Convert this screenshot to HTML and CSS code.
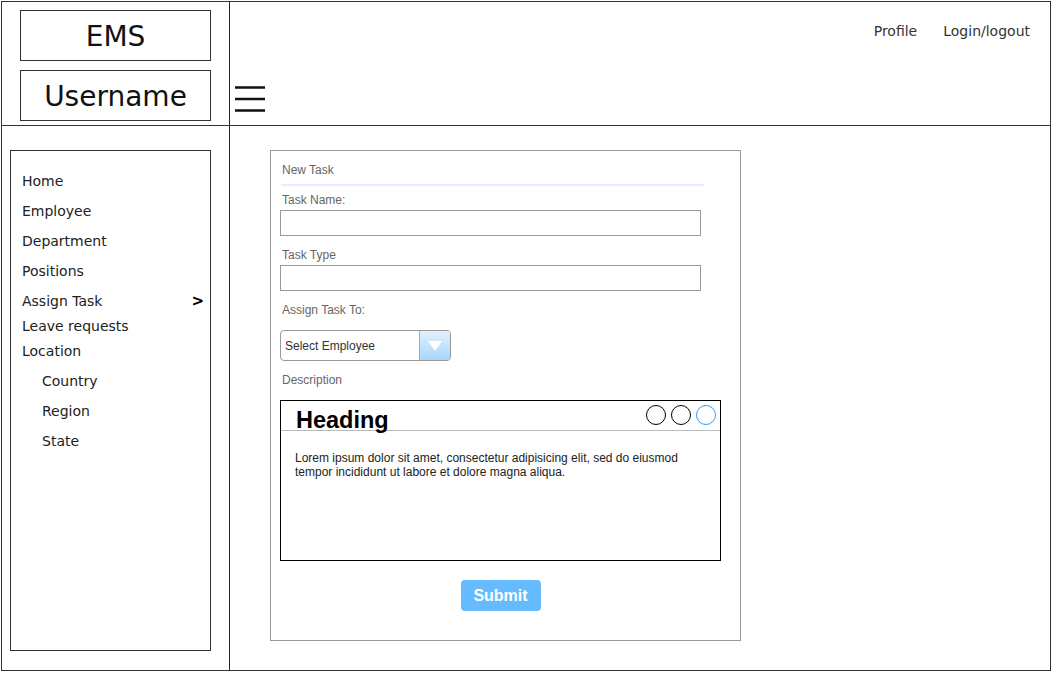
FILE: index.html
```html
<!DOCTYPE html>
<html lang="en">
<head>
    <meta charset="UTF-8">
    <meta name="viewport" content="width=device-width, initial-scale=1.0">
    <title>EMS - Assign Task</title>
    <link rel="stylesheet" href="styles.css">
</head>
<body>
    <div class="frame">
        <div class="brand">
            <div class="brand-box">EMS</div>
            <div class="brand-box">Username</div>
        </div>
        <div class="topbar">
            <nav class="user-links">
                <a href="#">Profile</a>
                <a href="#">Login/logout</a>
            </nav>
            <button class="menu-toggle" type="button" aria-label="Menu">
                <svg width="30" height="26" viewBox="0 0 30 26">
                    <path d="M0 1.5H30M0 13H30M0 24.5H30" stroke="#111" stroke-width="2.6" fill="none"/>
                </svg>
            </button>
        </div>
        <aside class="sidebar">
            <ul class="side-nav">
                <li><a href="#">Home</a></li>
                <li><a href="#">Employee</a></li>
                <li><a href="#">Department</a></li>
                <li><a href="#">Positions</a></li>
                <li class="active"><a href="#">Assign Task</a><span class="arrow">&gt;</span></li>
                <li class="tight"><a href="#">Leave requests</a></li>
                <li><a href="#">Location</a></li>
                <li class="sub"><a href="#">Country</a></li>
                <li class="sub"><a href="#">Region</a></li>
                <li class="sub"><a href="#">State</a></li>
            </ul>
        </aside>
        <main class="content">
            <form class="task-panel" onsubmit="return false;">
                <div class="panel-title">New Task</div>
                <div class="panel-rule"></div>

                <label class="field-label" for="task-name">Task Name:</label>
                <input class="text-input" id="task-name" type="text">

                <label class="field-label gap" for="task-type">Task Type</label>
                <input class="text-input" id="task-type" type="text">

                <label class="field-label gap">Assign Task To:</label>
                <div class="select-box">
                    <span class="select-text">Select Employee</span>
                    <span class="select-btn"><span class="caret"></span></span>
                </div>

                <label class="field-label gap">Description</label>
                <div class="desc-box">
                    <div class="desc-head">
                        <h3>Heading</h3>
                        <div class="dots">
                            <span class="dot"></span>
                            <span class="dot"></span>
                            <span class="dot blue"></span>
                        </div>
                    </div>
                    <p class="desc-text">Lorem ipsum dolor sit amet, consectetur adipisicing elit, sed do eiusmod tempor incididunt ut labore et dolore magna aliqua.</p>
                </div>

                <div class="actions">
                    <button class="submit-btn" type="submit">Submit</button>
                </div>
            </form>
        </main>
    </div>
</body>
</html>
```

FILE: styles.css
```css
body {
    margin: 0;
    padding: 0;
    background-color: #ffffff;
    font-family: 'DejaVu Sans', Verdana, sans-serif;
    color: #222;
}
a {
    color: inherit;
    text-decoration: none;
}
.frame {
    margin: 1px 0 0 1px;
    width: 1050px;
    height: 670px;
    box-sizing: border-box;
    border: 1px solid #333;
    display: grid;
    grid-template-columns: 228px 1fr;
    grid-template-rows: 124px 1fr;
}
.brand {
    border-right: 1px solid #222;
    border-bottom: 1px solid #333;
    padding: 8px 0 0 18px;
    display: flex;
    flex-direction: column;
    gap: 9px;
}
.brand-box {
    width: 191px;
    height: 51px;
    box-sizing: border-box;
    border: 1px solid #333;
    display: flex;
    align-items: center;
    justify-content: center;
    padding-top: 2px;
    font-size: 28px;
    color: #111;
}
.topbar {
    border-bottom: 1px solid #333;
    padding: 19px 20px 0 5px;
    display: flex;
    flex-direction: column;
}
.user-links {
    display: flex;
    justify-content: flex-end;
    gap: 26px;
    font-size: 14px;
    line-height: 20px;
    color: #333;
}
.menu-toggle {
    margin-top: 45px;
    padding: 0;
    border: 0;
    background: none;
    width: 30px;
    height: 26px;
    cursor: pointer;
}
.menu-toggle svg {
    display: block;
}
.sidebar {
    border-right: 1px solid #222;
    padding: 24px 0 0 8px;
}
.side-nav {
    list-style: none;
    margin: 0;
    width: 201px;
    height: 501px;
    box-sizing: border-box;
    border: 1px solid #333;
    padding: 15px 6px 0 11px;
    font-size: 14px;
}
.side-nav li {
    height: 30px;
    display: flex;
    align-items: center;
    justify-content: space-between;
    color: #222;
}
.side-nav li.tight {
    height: 20px;
}
.side-nav li.sub {
    padding-left: 20px;
}
.side-nav .arrow {
    font-weight: bold;
    font-size: 15px;
    color: #000;
}
.content {
    padding: 24px 0 0 40px;
}
.task-panel {
    width: 471px;
    height: 491px;
    box-sizing: border-box;
    border: 1px solid #999;
    padding: 10px 0 0 9px;
    font-family: 'Liberation Sans', Arial, sans-serif;
    font-size: 12px;
    display: flex;
    flex-direction: column;
    align-items: flex-start;
}
.panel-title {
    padding-left: 2px;
    line-height: 18px;
    color: #666;
}
.panel-rule {
    margin: 5px 0 0 1px;
    width: 423px;
    height: 2px;
    background-color: #e3effc;
}
.field-label {
    display: block;
    margin-top: 6px;
    padding-left: 2px;
    line-height: 16px;
    color: #666;
}
.field-label.gap {
    margin-top: 11px;
}
.text-input {
    margin: 2px 0 0 0;
    width: 421px;
    height: 26px;
    box-sizing: border-box;
    border: 1px solid #999;
    padding: 0 4px;
    font: inherit;
}
.select-box {
    margin-top: 12px;
    width: 171px;
    height: 31px;
    box-sizing: border-box;
    border: 1px solid #999;
    border-radius: 4px;
    display: flex;
    overflow: hidden;
    background-color: #fff;
}
.select-text {
    flex: 1;
    padding: 1px 0 0 4px;
    line-height: 29px;
    color: #333;
}
.select-btn {
    width: 30px;
    border-left: 1px solid #aaa;
    background: linear-gradient(#e2f1ff, #a9d5fb);
    display: flex;
    align-items: center;
    justify-content: center;
}
.caret {
    width: 0;
    height: 0;
    border-left: 7px solid transparent;
    border-right: 7px solid transparent;
    border-top: 10px solid #fff;
}
.desc-box {
    margin-top: 12px;
    width: 441px;
    height: 161px;
    box-sizing: border-box;
    border: 1px solid #000;
}
.desc-head {
    height: 30px;
    box-sizing: border-box;
    border-bottom: 1px solid #bbb;
    padding: 7px 4px 0 15px;
    display: flex;
    justify-content: space-between;
    align-items: flex-start;
}
.desc-head h3 {
    margin: 0;
    font-size: 23.5px;
    line-height: 24px;
    font-weight: bold;
    color: #000;
}
.dots {
    margin-top: -3px;
    display: flex;
    gap: 5px;
}
.dot {
    width: 20px;
    height: 20px;
    box-sizing: border-box;
    border: 1px solid #000;
    border-radius: 50%;
}
.dot.blue {
    border-color: #3399ff;
}
.desc-text {
    margin: 20px 14px 0 14px;
    line-height: 14px;
    color: #222;
}
.actions {
    margin-top: 19px;
    width: 441px;
    display: flex;
    justify-content: center;
}
.submit-btn {
    width: 80px;
    height: 31px;
    border: 0;
    border-radius: 4px;
    background-color: #66bbff;
    color: #fff;
    font-family: 'Liberation Sans', Arial, sans-serif;
    font-size: 16px;
    font-weight: bold;
    cursor: pointer;
}
```
